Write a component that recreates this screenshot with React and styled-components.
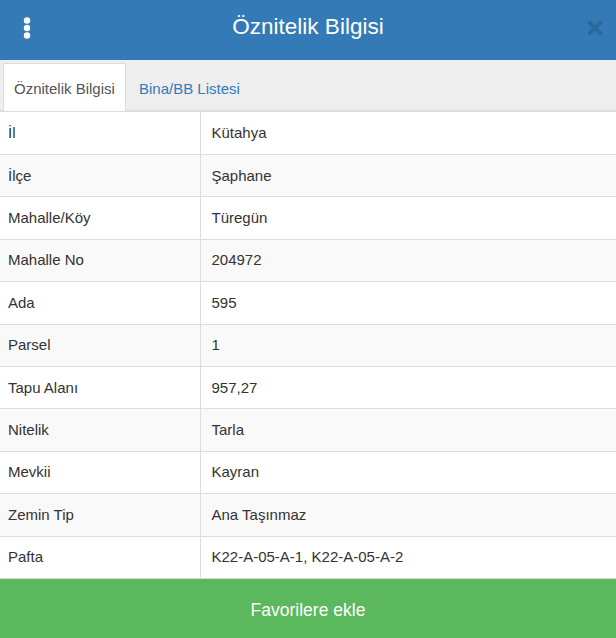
import React from "react";
import styled, { createGlobalStyle } from "styled-components";
import { FaTimes } from "react-icons/fa";

const rows = [
  ["İl", "Kütahya"],
  ["İlçe", "Şaphane"],
  ["Mahalle/Köy", "Türegün"],
  ["Mahalle No", "204972"],
  ["Ada", "595"],
  ["Parsel", "1"],
  ["Tapu Alanı", "957,27"],
  ["Nitelik", "Tarla"],
  ["Mevkii", "Kayran"],
  ["Zemin Tip", "Ana Taşınmaz"],
  ["Pafta", "K22-A-05-A-1, K22-A-05-A-2"],
];

const GlobalStyle = createGlobalStyle`
  html, body {
    margin: 0;
    padding: 0;
    background: #fff;
    font-family: "Liberation Sans", Arial, sans-serif;
    font-size: 15px;
    color: #333;
  }
  * { box-sizing: border-box; }
`;

const Page = styled.div`
  width: 616px;
  height: 638px;
  display: flex;
  flex-direction: column;
  overflow: hidden;
`;

const Header = styled.header`
  height: 60px;
  flex: none;
  background: #337ab7;
  display: flex;
  align-items: center;
  justify-content: space-between;
  padding: 0 10px 4px 23px;
  position: relative;
`;

const Title = styled.h1`
  margin: 0;
  font-size: 22.5px;
  font-weight: 400;
  color: #fff;
  position: absolute;
  left: 0;
  right: 0;
  top: 14px;
  line-height: 26px;
  text-align: center;
`;

const Dots = styled.svg`
  width: 8px;
  height: 22px;
  fill: #fff;
`;

const Close = styled.span`
  color: #2b689c;
  font-size: 22px;
  display: flex;
`;

const TabStrip = styled.nav`
  height: 52px;
  flex: none;
  background: #eee;
  border-bottom: 2px solid #ddd;
  padding: 3px 0 0 3px;
  display: flex;
`;

const Tab = styled.a`
  height: 48px;
  padding: 0 10px;
  line-height: 49px;
  font-size: 15px;
  color: ${(p) => (p.$active ? "#555" : "#337ab7")};
  background: ${(p) => (p.$active ? "#fff" : "transparent")};
  border: 1px solid ${(p) => (p.$active ? "#ddd" : "transparent")};
  border-bottom: 0;
  margin-right: 2px;
  width: ${(p) => (p.$active ? "123px" : "auto")};
`;

const Table = styled.table`
  width: 100%;
  border-collapse: separate;
  border-spacing: 0;
  table-layout: fixed;
  flex: none;
`;

const Row = styled.tr`
  height: 42.4px;
  background: ${(p) => (p.$odd ? "#f9f9f9" : "#fff")};
  &:first-child {
    height: 43px;
  }
`;

const Label = styled.td`
  width: 201px;
  padding: 0 8px 1px;
  border-right: 1px solid #ddd;
  border-bottom: 1px solid #ddd;
`;

const Value = styled.td`
  padding: 0 10.5px 1px;
  border-bottom: 1px solid #ddd;
`;

const FavButton = styled.button`
  flex: 1;
  border: 0;
  background: #5cb85c;
  color: #fff;
  font-family: inherit;
  font-size: 17.5px;
  padding: 4px 0 0;
`;

export default function App() {
  return (
    <Page>
      <GlobalStyle />
      <Header>
        <Dots viewBox="0 0 8 22">
          <circle cx="4" cy="3.5" r="3.2" />
          <circle cx="4" cy="11" r="3.2" />
          <circle cx="4" cy="18.5" r="3.2" />
        </Dots>
        <Title>Öznitelik Bilgisi</Title>
        <Close>
          <FaTimes />
        </Close>
      </Header>
      <TabStrip>
        <Tab $active>Öznitelik Bilgisi</Tab>
        <Tab>Bina/BB Listesi</Tab>
      </TabStrip>
      <Table>
        <tbody>
          {rows.map(([label, value], i) => (
            <Row key={label} $odd={i % 2 === 1}>
              <Label>{label}</Label>
              <Value>{value}</Value>
            </Row>
          ))}
        </tbody>
      </Table>
      <FavButton>Favorilere ekle</FavButton>
    </Page>
  );
}
